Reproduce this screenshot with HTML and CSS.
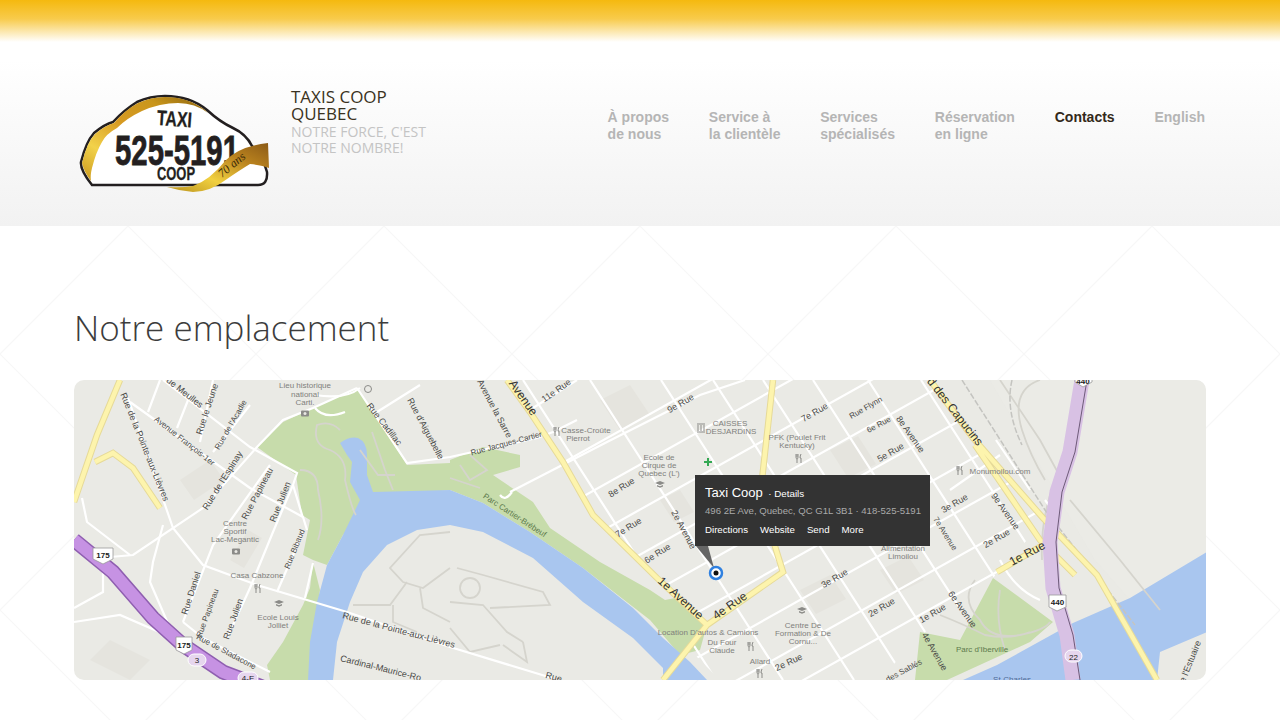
FILE: index.html
```html
<!DOCTYPE html>
<html lang="fr">
<head>
<meta charset="utf-8">
<title>Taxis Coop Quebec</title>
<link rel="stylesheet" href="styles.css">
</head>
<body>
<div class="topbar"></div>
<header class="header">
  <svg class="logo" viewBox="75 90 200 105" width="200" height="105" role="img" aria-label="Taxi Coop">
    <defs>
      <linearGradient id="gold" x1="0" y1="1" x2="1" y2="0">
        <stop offset="0" stop-color="#c9971c"/><stop offset=".25" stop-color="#f2d24a"/><stop offset=".5" stop-color="#d79a22"/><stop offset=".75" stop-color="#c9961c"/><stop offset="1" stop-color="#8a6210"/>
      </linearGradient>
      <linearGradient id="gold2" x1="0" y1="1" x2="1" y2="0">
        <stop offset="0" stop-color="#b8901c"/><stop offset=".35" stop-color="#f1d040"/><stop offset=".7" stop-color="#b9821e"/><stop offset="1" stop-color="#8b5a16"/>
      </linearGradient>
    </defs>
    <path class="logo-body" d="M92 185 Q80 170 81 162 Q86 142 94 133 Q105 124 113 122 Q124 110 137 102 Q150 96 165 96 Q190 96 207 110 Q220 122 233 128 Q246 134 252 146 Q262 154 267 172 Q268 185 258 185 Z"/>
    <path fill="url(#gold)" d="M82 163 Q87 142 95 134 Q106 125 114 123 Q125 110 138 103 Q151 97 165 97 Q188 97 205 110 L208 113 Q195 103 178 103 Q160 103 142 111 Q127 118 117 128 Q106 134 102 142 Q96 152 92 168 Q90 176 91 181 Q84 172 82 163 Z"/>
    <g class="logo-ink">
      <text class="logo-taxi" x="157" y="126" textLength="35" lengthAdjust="spacingAndGlyphs" transform="rotate(4 174 118)">TAXI</text>
      <text class="logo-num" x="115" y="165" textLength="124" lengthAdjust="spacingAndGlyphs">525-5191</text>
      <text class="logo-coop" x="157" y="180" textLength="38" lengthAdjust="spacingAndGlyphs">COOP</text>
    </g>
    <path fill="url(#gold2)" d="M167 187 Q182 188 193 186 Q210 180 226 160 Q240 146 268 143 L269 168 Q262 165 250 164 Q240 170 227 179 Q210 192 193 192 Q180 191 167 187 Z"/>
    <text class="logo-years" x="0" y="0" transform="translate(222 178) rotate(-40)">70 ans</text>
  </svg>
  <div class="brand">
    <div class="brand-name">TAXIS COOP<br>QUEBEC</div>
    <div class="brand-tag">NOTRE FORCE, C'EST<br>NOTRE NOMBRE!</div>
  </div>
  <nav class="nav">
    <a class="nav-item" href="#">À propos<br>de nous</a>
    <a class="nav-item" href="#">Service à<br>la clientèle</a>
    <a class="nav-item" href="#">Services<br>spécialisés</a>
    <a class="nav-item" href="#">Réservation<br>en ligne</a>
    <a class="nav-item active" href="#">Contacts</a>
    <a class="nav-item" href="#">English</a>
  </nav>
</header>
<main class="main">
  <h1 class="title">Notre emplacement</h1>
  <div class="map">
    <svg class="map-svg" viewBox="74 380 1132 300" width="1132" height="300">
      <defs>
        <clipPath id="grid"><path d="M505 380H930L973 438 1045 520 993 578 915 640 880 680H720L690 650 707 625 657 578 593 515 563 462 530 412Z"/></clipPath>
        <g id="fork" class="ico"><path d="M-3-4V-1Q-3 1-2 1V5M-2-4V-1M-1-4V-1Q-1 1-2 1M2-4Q1-2 1 0H2V5"/></g>
        <g id="cam"><rect class="ico-fill" x="-4" y="-2.5" width="8" height="6" rx="1"/><circle cx="0" cy=".5" r="1.5" fill="#e9e8e3"/></g>
        <g id="cap"><path class="ico-fill" d="M-5-1 0-3 5-1 0 1ZM-3 1 0 2.200 3 1V2.500L0 3.700-3 2.500Z"/></g>
        <path id="yellow" d="M120 380 97 435 74 502M95 462 113 453 133 468 160 508M507 380 530 412 563 462 593 515 657 578 707 625 683 655 663 680M707 625 783 572 760 498 773 380M997 572 1043 545M930 380 973 438 1043 518 1097 575 1157 680M975 445 1040 540 1075 575"/>
      </defs>
      <rect class="land" x="74" y="380" width="1132" height="300"/>
      <path class="block" d="M990 380H1206V560L1130 600 1095 560Z" opacity=".5"/>
      <path class="block-dark" d="M600 400l30-15 20 30-30 15ZM760 500l25-12 15 25-25 12ZM830 450l28-14 18 28-28 14ZM800 590l30-15 16 24-30 15ZM880 570l28-14 16 24-28 14ZM660 500l20-10 14 22-20 10ZM180 480l30-20 14 20-30 20ZM230 560l18-30 14 8-18 30ZM110 640l40 20-20 20-40-20Z"/>

      <path class="park" d="M257 447 283 422 313 408 357 388 407 465 450 463V460L483 447 520 455 520 467 493 475 533 502 550 528 600 562 650 590 665 600 675 598 707 625 700 650 680 655 650 620 583 568 530 532 483 503 450 490 403 495 370 508 343 535 327 565 313 560 303 555 310 520 302 515 296 475Z"/>
      <path class="park" d="M313 562 310 588 303 605 283 642 267 665 270 680H310L313 640 320 590Z"/>
      <path class="park" d="M993 578 1053 622 1030 642 947 680H915L920 632 960 640Z"/>
      <path class="water" d="M340 443Q350 436 358 438 367 442 367 455V475L373 492 450 490 483 503 530 532 583 568 633 608 663 638 690 662 707 680H663V668L633 638 583 602 533 558 483 532 450 525 417 530 387 545 363 572 350 602 337 642 333 680H308L310 642 317 602 327 565 343 535 360 500 350 482 352 462 347 455Z"/>
      <path class="water" d="M1207 552 1130 598 1073 623 997 665 963 680H1157L1160 652 1207 632Z"/>
      <g class="trail">
        <path d="M450 532 420 535 390 568 403 582 423 588 450 568M353 605H390L407 582M420 588 423 608 450 622M393 605V622L417 632"/>
        <path d="M450 602 483 605 507 632 523 642M490 608 550 605 543 592 483 575 457 568M450 628 470 652 500 645M523 642 527 662 503 645"/>
        <circle cx="470" cy="588" r="10"/>
        <path d="M340 430Q330 420 317 425 312 445 330 450 348 458 345 480 352 510 356 515M372 432 385 470 393 490M300 470Q318 470 318 490 325 520 318 540M360 450 378 475 395 475M460 465 470 480 487 470 470 455M450 478 480 488"/>
        <path d="M940 615Q965 625 985 635 1010 640 1030 632M975 580Q960 600 980 620 990 640 1020 635 1045 630 1050 622M1000 590Q995 620 1005 650"/>
        <path d="M1000 380 1040 440 1062 480M1040 380Q1010 390 1022 430 1030 455 1045 480M1070 500 1120 560 1160 610M1055 480Q1040 520 1042 560"/>
      </g>
      <g class="road">
        <path d="M128 398 173 528 203 565 257 585 347 612 450 647 552 678"/>
        <path d="M130 402 250 488 303 517 307 530M163 380 250 447 297 473 293 485 303 518M357 388 313 408 283 420 257 447 203 508 133 555 110 557"/>
        <path d="M213 380 200 442M250 405 213 452M160 380 148 412M190 395 177 428M270 465 213 545 183 622M293 485 273 532 250 588 227 638M303 532 277 592M313 563 305 598M183 622 203 638 270 672M74 608 103 592 103 568M74 622 120 615 173 638 203 662 245 685M82 498 87 522 130 555M163 525 153 562 150 582 170 628"/>
        <path d="M357 388 407 463 450 457 537 438 553 432 577 420M420 385 377 412M315 395Q345 400 360 388M315 408Q325 420 345 412"/>
        <path d="M533 408 577 380M510 492 607 442 700 395 745 380M500 495Q505 502 512 492"/>
        <path d="M996 440 1030 490M1045 500 1060 520M1000 455 950 490"/>
        <path d="M1000 560Q1015 590 1040 600"/>
      </g>
      <g class="road" clip-path="url(#grid)">
        <path d="M523 380 716 680M590 380 783 680M661 380 854 680M713 380 906 680M763 380 956 680M813 380 1006 680M868 380 1061 680M921 380 1114 680"/>
        <path d="M500 850 1100 514M500 813 1100 477M500 768 1100 432M500 723 1100 387M500 678 1100 342M500 633 1100 297M500 588 1100 252M500 543 1100 207M500 498 1100 162"/>
      </g>
      <g class="rail"><path d="M962 380 1045 510 1100 580 1135 625M1012 380Q1005 410 1022 445"/></g>
      <use href="#yellow" class="hw-case"/>
      <use href="#yellow" class="hw-fill"/>
      <g class="hw-p">
        <path class="h1" d="M74 540 113 572 153 618 183 645 223 672 270 690"/>
        <path class="h2" d="M74 540 113 572 153 618 183 645 223 672 270 690"/>
        <path class="h3" d="M1082 380 1070 452 1057 492 1050 542 1053 588 1067 635 1073 680"/>
        <path class="h4" d="M1087 380 1075 452 1062 492 1056 542 1059 588 1073 635 1080 680"/>
      </g>
      <g class="shield">
        <path d="M93 548H113V559L103 564 93 559Z"/><text x="103" y="558">175</text>
        <path d="M176 637H192V650L184 654 176 650Z"/><text x="184" y="648">175</text>
        <path d="M1049 595H1066V607L1057 611 1049 607Z"/><text x="1057.500" y="605">440</text>
        <path d="M1075 372H1092V382L1083 387 1075 382Z"/><text x="1083" y="384">440</text>
      </g>
      <g class="oval">
        <rect x="188" y="654" width="18" height="12" rx="6"/><text x="197" y="663">3</text>
        <rect x="1065" y="650" width="17" height="12" rx="6"/><text x="1073.500" y="660">22</text>
        <rect x="238" y="672" width="20" height="12" rx="6"/><text x="248" y="681">4-E</text>
      </g>
      <g class="ico-set">
        <use href="#cam" x="305" y="413"/><use href="#cam" x="236" y="551"/><use href="#fork" x="258" y="588"/><use href="#cap" x="279" y="603"/>
        <use href="#fork" x="557" y="431"/><use href="#cap" x="660" y="484"/><use href="#fork" x="799" y="458"/><use href="#fork" x="751" y="646"/><use href="#fork" x="960" y="470"/><use href="#cap" x="802" y="610"/><use href="#fork" x="760" y="673"/>
        <path class="ico" d="M697 424H705M698 425V431M701 425V431M704 425V431M697 432H705"/>
        <circle class="ico" cx="368" cy="389" r="3.500"/>
        <path class="plus" d="M704 462H712M708 458V466"/>
      </g>
      <g class="lbl">
        <text transform="translate(183 395) rotate(38)">ue Meulles</text>
        <text transform="translate(210 410) rotate(-72)">Rue le Jeune</text>
        <text class="s" transform="translate(233 426) rotate(-60)">Rue de l'Acadie</text>
        <text transform="translate(142 448) rotate(68)">Rue de la Pointe-aux-Lièvres</text>
        <text class="s" transform="translate(183 443) rotate(38)">Avenue François-1er</text>
        <text transform="translate(225 482) rotate(-58)">Rue de l'Espinay</text>
        <text transform="translate(260 495) rotate(-62)">Rue Papineau</text>
        <text transform="translate(283 503) rotate(-68)">Rue Julien</text>
        <text class="s" transform="translate(297 550) rotate(-68)">Rue Bibaud</text>
        <text transform="translate(194 594) rotate(-72)">Rue Daniel</text>
        <text class="s" transform="translate(210 614) rotate(-70)">Rue Papineau</text>
        <text transform="translate(236 620) rotate(-70)">Rue Julien</text>
        <text class="s" transform="translate(225 654) rotate(28)">Rue de Stadacone</text>
        <text transform="translate(398 633) rotate(15)">Rue de la Pointe-aux-Lièvres</text>
        <text transform="translate(380 671) rotate(14)">Cardinal-Maurice-Ro</text>
        <text transform="translate(382 426) rotate(52)">Rue Cadillac</text>
        <text transform="translate(423 430) rotate(62)">Rue d'Aiguebelle</text>
        <text transform="translate(492 410) rotate(62)">Avenue la Sarre</text>
        <text transform="translate(558 393) rotate(-35)">11e Rue</text>
        <text transform="translate(682 406) rotate(-30)">9e Rue</text>
        <text class="s" transform="translate(507 446) rotate(-15)">Rue Jacques-Cartier</text>
        <text transform="translate(623 490) rotate(-32)">8e Rue</text>
        <text transform="translate(630 530) rotate(-32)">7e Rue</text>
        <text transform="translate(659 556) rotate(-32)">6e Rue</text>
        <text transform="translate(681 531) rotate(62)">2e Avenue</text>
        <text transform="translate(816 415) rotate(-30)">7e Rue</text>
        <text class="s" transform="translate(867 410) rotate(-30)">Rue Flynn</text>
        <text class="s" transform="translate(880 427) rotate(-28)">6e Rue</text>
        <text transform="translate(908 436) rotate(55)">8e Avenue</text>
        <text transform="translate(892 455) rotate(-30)">5e Rue</text>
        <text transform="translate(956 506) rotate(-30)">3e Rue</text>
        <text transform="translate(1003 513) rotate(55)">9e Avenue</text>
        <text class="s" transform="translate(943 535) rotate(58)">7e Avenue</text>
        <text transform="translate(998 541) rotate(-30)">2e Rue</text>
        <text transform="translate(883 610) rotate(-30)">2e Rue</text>
        <text transform="translate(934 616) rotate(-30)">1e Rue</text>
        <text transform="translate(960 611) rotate(55)">6e Avenue</text>
        <text transform="translate(932 653) rotate(60)">4e Avenue</text>
        <text class="s" transform="translate(905 673) rotate(-28)">des Sablés</text>
        <text transform="translate(790 665) rotate(-25)">2e Rue</text>
        <text transform="translate(836 581) rotate(-30)">3e Rue</text>
        <text transform="translate(1192 665) rotate(-68)">de l'Estuaire</text>
        <text transform="translate(553 680) rotate(15)">Rue</text>
        <text class="b" transform="translate(520 400) rotate(55)">Avenue</text>
        <text class="b" transform="translate(678 601) rotate(42)">1e Avenue</text>
        <text class="b" transform="translate(732 609) rotate(-35)">4e Rue</text>
        <text class="b" transform="translate(952 414) rotate(52)">d des Capucins</text>
        <text class="b" transform="translate(1029 557) rotate(-28)">1e Rue</text>
      </g>
      <g class="poi">
        <text x="305" y="388">Lieu historique</text><text x="305" y="397">national</text><text x="305" y="405">Carti.</text>
        <text x="235" y="526">Centre</text><text x="235" y="534">Sportif</text><text x="235" y="542">Lac-Megantic</text>
        <text x="257" y="578">Casa Cabzone</text>
        <text x="278" y="620">Ecole Louis</text><text x="278" y="628">Jolliet</text>
        <text x="659" y="460">Ecole de</text><text x="659" y="468">Cirque de</text><text x="659" y="476">Quebec (L')</text>
        <text x="797" y="440">PFK (Poulet Frit</text><text x="797" y="448">Kentucky)</text>
        <text x="708" y="635">Location D'autos &amp; Camions</text>
        <text x="722" y="645">Du Four</text><text x="722" y="653">Claude</text>
        <text x="760" y="664">Allard</text>
        <text x="803" y="628">Centre De</text><text x="803" y="636">Formation &amp; De</text><text x="803" y="644">Cornu...</text>
        <text x="903" y="551">Alimentation</text><text x="903" y="559">Limoilou</text>
        <text x="982" y="652" class="g">Parc d'Iberville</text>
        <text x="515" y="518" class="g" transform="rotate(33 515 515)">Parc Cartier-Brébeuf</text>
        <text x="1012" y="682" class="w">St-Charles</text>
        <text x="586" y="433">Casse-Croûte</text><text x="578" y="441">Pierrot</text>
        <text x="730" y="426">CAISSES</text><text x="731" y="434">DESJARDINS</text>
        <text x="1000" y="474">Monumoilou.com</text>
      </g>
      <g class="pin">
        <path class="pin-tail" d="M696 546H708L714 568Z"/>
        <circle class="pin-ring" cx="716" cy="573" r="6"/>
        <circle class="pin-dot" cx="716" cy="573" r="2.500"/>
      </g>
    </svg>
    <div class="popup">
      <div class="popup-head"><span class="popup-name">Taxi Coop</span> <span class="popup-det">· Details</span></div>
      <div class="popup-addr">496 2E Ave, Quebec, QC G1L 3B1 · 418-525-5191</div>
      <div class="popup-links"><span>Directions</span><span>Website</span><span>Send</span><span>More</span></div>
    </div>
  </div>
</main>
</body>
</html>
```
FILE: styles.css
```css
* { box-sizing: border-box; }
html, body { margin: 0; padding: 0; }
body {
  background-color: #fff;
  background-image:
    linear-gradient(45deg, transparent calc(50% - 1px), #f7f7f7 50%, transparent calc(50% + 1px)),
    linear-gradient(-45deg, transparent calc(50% - 1px), #f7f7f7 50%, transparent calc(50% + 1px));
  background-size: 256px 256px;
  background-position: 0 98px;
  font-family: "Open Sans", sans-serif;
}
.topbar { height: 42px; background: linear-gradient(#f5b90f 0, #f8cb4c 45%, #fff 100%); }
.header {
  display: flex;
  align-items: flex-start;
  height: 184px;
  padding: 48px 75px 0;
  background: linear-gradient(#fff 0, #fff 10%, #f2f2f2 100%);
}
.logo { display: block; flex: none; }
.logo-body { fill: #fff; stroke: #231f20; stroke-width: 2.500; }
.logo-ink text { fill: #231f20; stroke: #231f20; font-family: "Liberation Sans", sans-serif; font-weight: 700; }
.logo-taxi { font-size: 21px; stroke-width: .3; }
.logo-num { font-size: 42px; stroke-width: .8; }
.logo-coop { font-size: 18px; stroke-width: .3; }
.logo-years { fill: #3a2a08; font-family: "Liberation Serif", serif; font-style: italic; font-size: 12px; }
.brand { margin: -2px 0 0 16px; width: 150px; color: #3a3221; }
.brand-name { font-size: 17px; line-height: 17px; }
.brand-tag { font-size: 14px; line-height: 16px; color: #c4c4c4; margin-top: 2px; }
.nav { display: flex; gap: 39.8px; margin: 19px 0 0 auto; }
.nav-item {
  font-family: "Liberation Sans", sans-serif;
  font-weight: 700;
  font-size: 14px;
  line-height: 17px;
  color: #b5b5b5;
  text-decoration: none;
  white-space: nowrap;
}
.nav-item.active { color: #33291a; }
.main { width: 1132px; margin: 0 auto; padding: 78px 0 40px; }
.title {
  margin: 0 0 29px;
  font-size: 35px;
  line-height: 47px;
  font-weight: 300;
  color: #3c3c3c;
}
.map { position: relative; width: 1132px; height: 300px; border-radius: 10px; overflow: hidden; }
.map-svg { display: block; }
.land { fill: #eaeae5; }
.block { fill: #ecebe7; }
.block-dark { fill: #e5e4de; }
.park { fill: #c7dcab; }
.water { fill: #a9c6ef; }
.trail path, .trail circle { fill: none; stroke: #d5d4cd; stroke-width: 1.800; }
.road path { fill: none; stroke: #fff; stroke-width: 2.200; }
.rail path { fill: none; stroke: #c4c4c0; stroke-width: 1.500; stroke-dasharray: 6 2; }
.hw-case { fill: none; stroke: #e6da98; stroke-width: 6.500; }
.hw-fill { fill: none; stroke: #fdf4ad; stroke-width: 4.500; }
.h1 { fill: none; stroke: #8f5fb0; stroke-width: 15; }
.h2 { fill: none; stroke: #c692e3; stroke-width: 12; }
.h3 { fill: none; stroke: #d8c1e4; stroke-width: 15; }
.h4 { fill: none; stroke: #6d5a78; stroke-width: 1; }
.shield path { fill: #fff; stroke: #999; stroke-width: .8; }
.shield text { font: 700 8px "Liberation Sans", sans-serif; fill: #222; text-anchor: middle; }
.oval rect { fill: #e6d6ee; stroke: #fff; stroke-width: 1; }
.oval text { font: 8px "Liberation Sans", sans-serif; fill: #222; text-anchor: middle; }
.ico { fill: none; stroke: #8b8b88; stroke-width: 1; }
.ico-fill { fill: #8b8b88; }
.plus { fill: none; stroke: #34a853; stroke-width: 2; }
.lbl text { font: 9px "Liberation Sans", sans-serif; fill: #4a4a48; text-anchor: middle; }
.lbl text.s { font-size: 8px; }
.lbl text.b { font-size: 12px; fill: #333; }
.poi text { font: 8px "Liberation Sans", sans-serif; fill: #80807c; text-anchor: middle; }
.poi text.g { fill: #5c7a4c; }
.poi text.w { fill: #4f6a96; }
.pin-tail { fill: #666; }
.pin-ring { fill: #fff; stroke: #2f80e0; stroke-width: 2.500; }
.pin-dot { fill: #111; }
.popup {
  position: absolute;
  left: 621px;
  top: 95px;
  width: 235px;
  height: 71px;
  padding: 9px 10px 0;
  background: #333;
  color: #fff;
  font-family: "Liberation Sans", sans-serif;
}
.popup-head { line-height: 16px; white-space: nowrap; }
.popup-name { font-size: 13px; }
.popup-det { font-size: 9.800px; margin-left: 1px; }
.popup-addr { font-size: 9.600px; line-height: 14px; color: #aaa; margin-top: 2px; white-space: nowrap; }
.popup-links { display: flex; gap: 12px; font-size: 9.700px; line-height: 14px; margin-top: 5px; }
```
